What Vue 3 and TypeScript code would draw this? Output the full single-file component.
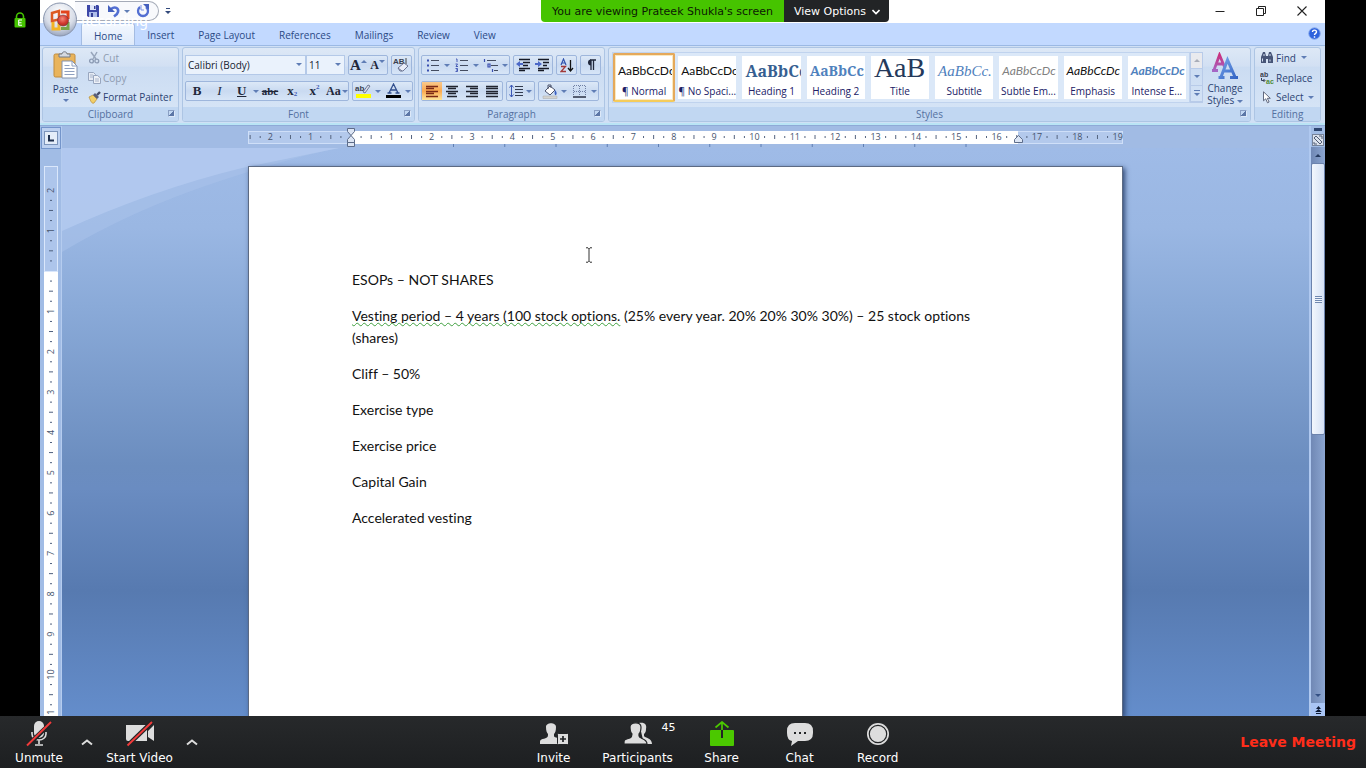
<script setup lang="ts">
import { ref } from 'vue'

interface StyleItem { name: string; sample: string; cls: string }

const tabs: string[] = ['Home', 'Insert', 'Page Layout', 'References', 'Mailings', 'Review', 'View']
const activeTab = ref('Home')

const styleItems: StyleItem[] = [
  { name: '¶ Normal', sample: 'AaBbCcDc', cls: 'plain' },
  { name: '¶ No Spaci...', sample: 'AaBbCcDc', cls: 'plain' },
  { name: 'Heading 1', sample: 'AaBbCc', cls: 'h1' },
  { name: 'Heading 2', sample: 'AaBbCc', cls: 'h2' },
  { name: 'Title', sample: 'AaB', cls: 'title' },
  { name: 'Subtitle', sample: 'AaBbCc.', cls: 'subtitle' },
  { name: 'Subtle Em...', sample: 'AaBbCcDc', cls: 'subtle' },
  { name: 'Emphasis', sample: 'AaBbCcDc', cls: 'emphasis' },
  { name: 'Intense E...', sample: 'AaBbCcDc', cls: 'intense' },
]
const activeStyle = ref('¶ Normal')

const fontName = ref('Calibri (Body)')
const fontSize = ref('11')

/* Ruler geometry: one centimetre in pixels, and the zero marks. */
const CM = 40.35
const ZERO_X = 103
const ZERO_Y = 105

const range = (from: number, to: number): number[] =>
  Array.from({ length: to - from + 1 }, (_, i) => from + i)

const hNums = range(-2, 19).filter((n) => n !== 0).map((n) => ({ n: Math.abs(n), x: ZERO_X + n * CM }))
const hHalves = range(-3, 18).map((n) => ZERO_X + (n + 0.5) * CM)
const hDots = range(-5, 37).map((n) => ZERO_X + (n + 0.5) * CM / 2).filter((x) => x > 4)
const tabStops = range(2, 12).map((n) => ZERO_X + n * 51.25)
const vNums = range(-2, 30).filter((n) => n !== 0).map((n) => ({ n: Math.abs(n), y: ZERO_Y + n * CM }))
const vHalves = range(-2, 30).map((n) => ZERO_Y + (n + 0.5) * CM)
const vDots = range(-4, 60).map((n) => ZERO_Y + (n + 0.5) * CM / 2)
</script>

<template>
  <div class="meeting">
    <div class="stage">
      <aside class="rail">
        <svg class="lock" width="12" height="16" viewBox="0 0 12 16">
          <path d="M2.5 7V4.5a3.5 3.5 0 0 1 7 0V7" fill="none" stroke="#45c400" stroke-width="1.6" />
          <rect x="0.5" y="6" width="11" height="9.5" rx="1" fill="#45c400" />
          <path d="M4.5 8h3.5M4.5 10.7h3M4.5 13.3h3.5M4.7 8v5.3" stroke="#fff" stroke-width="1.1" fill="none" />
        </svg>
      </aside>

      <section class="word">
        <header class="titlebar">
          <div class="quick">
            <button aria-label="Save"><svg width="14" height="14" viewBox="0 0 14 14"><path d="M1 1h11l1 1v11H1z" fill="#3d48a8" /><path d="M4 1h6v5H4z" fill="#dfe6fa" /><path d="M3 8h8v5H3z" fill="#aebdea" /><path d="M8 2h1.5v3H8zM5 9h2v4H5z" fill="#343f94" /></svg></button>
            <button aria-label="Undo"><svg width="14" height="14" viewBox="0 0 14 14"><path d="M4 5c4-3 8-1 7 3-.4 2-2 3-4 4.500" fill="none" stroke="#536fd2" stroke-width="2.6" /><path d="M1 1v7h7z" fill="#4560bd" /></svg></button>
            <i class="arr"></i>
            <button aria-label="Redo"><svg width="14" height="14" viewBox="0 0 14 14"><path d="M4 3a5 5 0 1 0 6 0" fill="none" stroke="#536fd2" stroke-width="2.3" /><path d="M7 0h6v6z" fill="#4560bd" /><path d="M5 1v5h3" fill="none" stroke="#7c94e6" /></svg></button>
          </div>
          <button class="customize" aria-label="Customize toolbar"><svg width="8" height="8" viewBox="0 0 8 8"><path d="M2 1.500h4" stroke="#334a7c" /><path d="M1 4h6L4 7z" fill="#334a7c" /></svg></button>
          <div class="winbtns">
            <button aria-label="Minimize"><svg width="10" height="10" viewBox="0 0 10 10"><path d="M0.500 5.500h9" stroke="#222" /></svg></button>
            <button aria-label="Restore"><svg width="10" height="10" viewBox="0 0 10 10"><path d="M0.500 2.500h7v7h-7zM2.500 2.500v-2h7v7h-2" fill="none" stroke="#222" /></svg></button>
            <button aria-label="Close"><svg width="10" height="10" viewBox="0 0 10 10"><path d="M0.500 0.500l9 9M9.500 0.500l-9 9" stroke="#222" stroke-width="1.100" /></svg></button>
          </div>
          <button class="orb" aria-label="Office menu">
            <svg width="36" height="37" viewBox="0 0 36 37">
              <defs><radialGradient id="orbFill" cx=".5" cy=".3" r=".75"><stop offset="0" stop-color="#fff" /><stop offset=".6" stop-color="#d8dde8" /><stop offset="1" stop-color="#8d9ab5" /></radialGradient>
                <radialGradient id="recFill" cx=".45" cy=".35" r=".7"><stop offset="0" stop-color="#f58a7c" /><stop offset=".6" stop-color="#d3392f" /><stop offset="1" stop-color="#a82a24" /></radialGradient></defs>
              <circle cx="18" cy="18.500" r="16.500" fill="url(#orbFill)" stroke="#8995ad" />
              <path d="M17 10l-7 2v8l7-1.500z" fill="none" stroke="#dd5a22" stroke-width="2.500" />
              <path d="M19 11h7v7" fill="none" stroke="#e2441d" stroke-width="3" />
              <path d="M11 21v7h6v-6" fill="none" stroke="#f3b323" stroke-width="3" />
              <path d="M19 27.500h7V21" fill="none" stroke="#78a548" stroke-width="3" />
              <circle cx="21" cy="19.500" r="5.500" fill="url(#recFill)" stroke="#7c3b3f" stroke-width=".7" />
            </svg>
          </button>
          <span class="recording">Recording</span>
        </header>

        <nav class="tabs">
          <button v-for="t in tabs" :key="t" :class="{ on: t === activeTab }" @click="activeTab = t">{{ t }}</button>
          <button class="help" aria-label="Help"><svg width="13" height="13" viewBox="0 0 13 13"><circle cx="6.500" cy="6.500" r="5.800" fill="#2e62dd" stroke="#8fb0ee" /><path d="M4.500 5c0-2.500 4-2.500 4 0 0 1.300-2 1.400-2 3M6.500 9.300v1.400" fill="none" stroke="#fff" stroke-width="1.400" /></svg></button>
        </nav>

        <div class="ribbon">
          <div class="group clipboard">
            <div class="gbody">
              <button class="paste">
                <svg width="26" height="29" viewBox="0 0 26 29"><rect x="1" y="3" width="21" height="23" rx="1.500" fill="#e9b45c" stroke="#c08b3c" /><path d="M6 6V3h3c0-3 5-3 5 0h3v3z" fill="#d5d9df" stroke="#727a86" /><path d="M9 10h10l5 5v12H9z" fill="#fff" stroke="#8492ad" /><path d="M19 10v5h5M11.500 14.500h5M11.500 17.500h10M11.500 20.500h10M11.500 23.500h10" fill="none" stroke="#8fa0c0" /></svg>
                <span>Paste</span><i class="arr"></i>
              </button>
              <div class="stack">
                <button class="off"><svg width="13" height="13" viewBox="0 0 13 13"><path d="M3 1l5 7M9 1L5 8" stroke="#98a6bc" stroke-width="1.500" /><circle cx="3.500" cy="10" r="1.900" fill="none" stroke="#8d9cb5" stroke-width="1.400" /><circle cx="8.800" cy="10" r="1.900" fill="none" stroke="#8d9cb5" stroke-width="1.400" /></svg>Cut</button>
                <button class="off"><svg width="13" height="13" viewBox="0 0 13 13"><path d="M.5 1.500h5l2 2v6h-7z" fill="#e6ebf4" stroke="#98a6bf" /><path d="M5.500 4.500h4l3 2.500v5.500h-7z" fill="#eef1f7" stroke="#98a6bf" /><path d="M7 8h4M7 10h4M2 4h3M2 6h3" stroke="#a8b4ca" /></svg>Copy</button>
                <button><svg width="13" height="13" viewBox="0 0 13 13"><path d="M1 6l4-2 4 4-3 4c-2 1-3-1-5-6z" fill="#f2cf68" stroke="#b78c37" stroke-width=".7" /><path d="M5 4l4 4 2-2-4-4z" fill="#5a5f78" /><path d="M9 4l3-3" stroke="#474f6c" stroke-width="2.400" /></svg>Format Painter</button>
              </div>
            </div>
            <footer>Clipboard<i class="launch"></i></footer>
          </div>

          <div class="group font">
            <div class="gbody rows">
              <div class="row">
                <div class="combo">
                  <label class="wide"><select v-model="fontName" aria-label="Font"><option>Calibri (Body)</option><option>Cambria</option></select><i class="arr"></i></label>
                  <label class="slim"><select v-model="fontSize" aria-label="Font size"><option>11</option><option>12</option></select><i class="arr"></i></label>
                </div>
                <div class="set">
                  <button class="serif grow" aria-label="Grow font">A<i class="arr up"></i></button>
                  <button class="serif shrink" aria-label="Shrink font">A<i class="arr"></i></button>
                </div>
                <div class="set"><button aria-label="Clear formatting"><svg width="17" height="16" viewBox="0 0 17 16"><text x="0" y="7" class="tiny">AB</text><path d="M13 1v6" stroke="#444" /><path d="M5 11l6-5 4 3-5 5H7z" fill="#e9edf8" stroke="#6d7694" /><path d="M5 11l4 3" stroke="#6d7694" /></svg></button></div>
              </div>
              <div class="row">
                <div class="set fmt">
                  <button class="serif b">B</button>
                  <button class="serif it">I</button>
                  <button class="serif u"><span>U</span></button><i class="arr"></i>
                  <button class="serif s">abc</button>
                  <button class="serif x">x<sub>2</sub></button>
                  <button class="serif x">x<sup>2</sup></button>
                  <button class="serif aa">Aa<i class="arr"></i></button>
                </div>
                <div class="set ink">
                  <button aria-label="Highlight"><svg width="17" height="16" viewBox="0 0 17 16"><text x="0" y="8" class="tiny">ab</text><path d="M8 9l5-7 2 1-5 7z" fill="#d7dceb" stroke="#59627e" stroke-width=".8" /><rect x="1" y="11" width="15" height="4" fill="#ff0" /></svg></button><i class="arr"></i>
                  <button aria-label="Font color"><svg width="15" height="16" viewBox="0 0 15 16"><path d="M3 10L7.500 1 12 10M4.500 7h6M1.500 10h4M9.500 10h4" fill="none" stroke="#33508f" stroke-width="1.300" /><rect x="0" y="12" width="15" height="3" fill="#000" /></svg></button><i class="arr"></i>
                </div>
              </div>
            </div>
            <footer>Font<i class="launch"></i></footer>
          </div>

          <div class="group para">
            <div class="gbody rows">
              <div class="row">
                <div class="set lists">
                  <button aria-label="Bullets"><svg width="14" height="14" viewBox="0 0 14 14"><path d="M5 2.500h8M5 7.500h8M5 12.500h8" stroke="#444c60" /><path d="M1 2.500h2M1 7.500h2M1 12.500h2" stroke="#3a4fb0" stroke-width="2" /></svg></button><i class="arr"></i>
                  <button aria-label="Numbering"><svg width="14" height="14" viewBox="0 0 14 14"><path d="M5 2.500h8M5 7.500h8M5 12.500h8" stroke="#444c60" /><path d="M1 1h1v3M.5 6h2L1 8.500h2M.5 10.500h2v3h-2M1 12h1" fill="none" stroke="#3a4fb0" stroke-width=".9" /></svg></button><i class="arr"></i>
                  <button aria-label="Multilevel list"><svg width="16" height="14" viewBox="0 0 16 14"><path d="M4 2.500h9M8 7.500h7M11 12.500h4" stroke="#444c60" /><path d="M1.500 1v3M5 6h2v3H5zM9.500 11v3" fill="none" stroke="#3a4fb0" stroke-width="1.200" /></svg></button><i class="arr"></i>
                </div>
                <div class="set">
                  <button aria-label="Decrease indent"><svg width="15" height="14" viewBox="0 0 15 14"><path d="M3 1.500h11M7 4.500h7M7 7.500h5M3 10.500h11M3 12.500h6" stroke="#161a26" stroke-width="1.300" /><path d="M0 6l4-3v2h3v2H4v2z" fill="#4b68c8" /></svg></button>
                  <button aria-label="Increase indent"><svg width="15" height="14" viewBox="0 0 15 14"><path d="M3 1.500h11M8 4.500h6M8 7.500h4M3 10.500h11M3 12.500h6" stroke="#161a26" stroke-width="1.300" /><path d="M7 6L3 3v2H0v2h3v2z" fill="#4b68c8" /></svg></button>
                </div>
                <div class="set"><button aria-label="Sort"><svg width="14" height="15" viewBox="0 0 14 15"><path d="M1 7l2.500-6L6 7M2 5h3" fill="none" stroke="#3153ae" stroke-width="1.200" /><path d="M1 8.500h4.500L1 13.500h5" fill="none" stroke="#a23a3a" stroke-width="1.300" /><path d="M10.500 2v11M8 10l2.500 3 2.500-3" fill="none" stroke="#111" stroke-width="1.300" /></svg></button></div>
                <div class="set"><button aria-label="Show marks"><svg width="12" height="14" viewBox="0 0 12 14"><path d="M6 2v10M8.500 2v10M5 2h6" stroke="#20283c" stroke-width="1.300" /><path d="M6 1.500a3 3 0 0 0 0 6z" fill="#20283c" /></svg></button></div>
              </div>
              <div class="row">
                <div class="set aligns">
                  <button class="hot" aria-label="Align left"><svg width="14" height="13" viewBox="0 0 14 13"><path d="M1 1.500h12M1 3.500h8M1 6.500h12M1 8.500h8M1 11.500h12" stroke="#7c2a16" stroke-width="1.300" /></svg></button>
                  <button aria-label="Center"><svg width="14" height="13" viewBox="0 0 14 13"><path d="M1 1.500h12M3 3.500h8M1 6.500h12M3 8.500h8M2 11.500h10" stroke="#20242f" stroke-width="1.300" /></svg></button>
                  <button aria-label="Align right"><svg width="14" height="13" viewBox="0 0 14 13"><path d="M1 1.500h12M5 3.500h8M1 6.500h12M5 8.500h8M1 11.500h12" stroke="#20242f" stroke-width="1.300" /></svg></button>
                  <button aria-label="Justify"><svg width="14" height="13" viewBox="0 0 14 13"><path d="M1 1.500h12M1 3.500h12M1 6.500h12M1 8.500h12M1 11.500h12" stroke="#20242f" stroke-width="1.300" /></svg></button>
                </div>
                <div class="set"><button class="spacing" aria-label="Line spacing"><svg width="15" height="14" viewBox="0 0 15 14"><path d="M6 2.500h8M6 5.500h8M6 8.500h8M6 11.500h8" stroke="#333b4e" /><path d="M2.500 1v12M.5 3.500l2-2.500 2 2.500M.5 10.500l2 2.500 2-2.500" fill="none" stroke="#3b57b5" /></svg><i class="arr"></i></button></div>
                <div class="set ink">
                  <button aria-label="Shading"><svg width="16" height="15" viewBox="0 0 16 15"><path d="M3 7l5-5 5 4-5 5z" fill="#fff" stroke="#4b526b" /><path d="M6 5V1h3v3" fill="none" stroke="#4b526b" /><path d="M13 6c2 2 2 4 1 5s-2-2-1-5z" fill="#3a5fc2" /><path d="M1 12h14v2.500H1z" fill="#d4d3cf" stroke="#a9a9a9" stroke-width=".5" /></svg></button><i class="arr"></i>
                  <button aria-label="Borders"><svg width="13" height="13" viewBox="0 0 13 13"><path d="M1 .5h11M1 6.500h11M.5 1v10M6.500 1v10M12.500 1v10" stroke="#7080a4" stroke-dasharray="1 1" /><path d="M0 12h13" stroke="#2a3145" stroke-width="1.400" /></svg></button><i class="arr"></i>
                </div>
              </div>
            </div>
            <footer>Paragraph<i class="launch"></i></footer>
          </div>

          <div class="group styles">
            <div class="gbody">
              <div class="gallery">
                <button v-for="s in styleItems" :key="s.name" class="card" :class="{ on: s.name === activeStyle }" @click="activeStyle = s.name">
                  <span class="sample" :class="s.cls">{{ s.sample }}</span>
                  <span class="cname">{{ s.name }}</span>
                </button>
              </div>
              <div class="gscroll">
                <button class="dim" aria-label="Previous styles"><i class="arr up"></i></button>
                <button aria-label="Next styles"><i class="arr"></i></button>
                <button aria-label="More styles"><i class="bar"></i><i class="arr"></i></button>
              </div>
              <button class="change">
                <svg width="28" height="28" viewBox="0 0 28 28"><defs><linearGradient id="aPink" x1="0" y1="0" x2="0" y2="1"><stop offset="0" stop-color="#c9307f" /><stop offset="1" stop-color="#a566c5" /></linearGradient><linearGradient id="aBlue" x1="0" y1="0" x2="1" y2="1"><stop offset="0" stop-color="#78a5ea" /><stop offset="1" stop-color="#3263c4" /></linearGradient></defs><path d="M3 18L8.500 3 14 16M5 12h7M1 18.500h6" fill="none" stroke="url(#aPink)" stroke-width="2.800" /><path d="M10 25L16.500 8 24 25M12 19h9M7.500 25.500h6M19 25.500h8" fill="none" stroke="url(#aBlue)" stroke-width="3" /></svg>
                <span>Change</span><span>Styles <i class="arr"></i></span>
              </button>
            </div>
            <footer>Styles<i class="launch"></i></footer>
          </div>

          <div class="group editing">
            <div class="gbody stack">
              <button><svg width="14" height="13" viewBox="0 0 14 13"><path d="M1 6l2-5h2l1 4h2l1-4h2l2 5v6H8V8H6v4H1z" fill="#465477" /><path d="M2.500 7.500v3M4 3v2M10 3v2M10 8.500v2" stroke="#d3def2" /></svg>Find <i class="arr"></i></button>
              <button><svg width="14" height="13" viewBox="0 0 14 13"><text x="0" y="6" class="tiny small">ab</text><text x="6" y="13" class="tiny small green">ac</text><path d="M1.500 7v2.500h3M3.500 8l1.500 1.500L3.500 11" fill="none" stroke="#333d58" /></svg>Replace</button>
              <button><svg width="14" height="13" viewBox="0 0 14 13"><path d="M3.500.8v9l2.200-2 1.800 4 1.600-.8-1.800-3.700h3z" fill="#fff" stroke="#525b73" stroke-width=".9" /></svg>Select <i class="arr"></i></button>
            </div>
            <footer>Editing</footer>
          </div>
        </div>

        <div class="work">
          <div class="leftcol">
            <button class="tabmark" aria-label="Tab selector"><svg width="14" height="14" viewBox="0 0 14 14"><rect x=".5" y=".5" width="13" height="13" fill="#e5edf9" stroke="#7c94bb" /><path d="M5 4v5.500h5" fill="none" stroke="#20304e" stroke-width="2" /></svg></button>
            <div class="vruler">
              <svg width="14" height="100%">
                <rect x=".5" y=".5" width="13" height="105" fill="#adc5eb" stroke="#dae7fb" />
                <rect x="0" y="106" width="14" height="2000" fill="#fff" />
                <path v-for="y in vHalves" :key="'h' + y" :d="`M5 ${y}h4`" stroke="#4e5f7d" />
                <path v-for="y in vDots" :key="'d' + y" :d="`M6 ${y}h2`" stroke="#4e5f7d" />
                <text v-for="m in vNums" :key="'n' + m.y" :transform="`translate(10 ${m.y}) rotate(-90)`" class="rnum">{{ m.n }}</text>
              </svg>
            </div>
          </div>

          <div class="center">
            <div class="hruler">
              <svg width="875" height="22" viewBox="0 1 875 22">
                <rect x=".5" y="6.500" width="874" height="12" fill="#b3c9ec" stroke="#cfdff8" />
                <rect x="103" y="6" width="667" height="13" fill="#fff" />
                <path v-for="x in hHalves" :key="'h' + x" :d="`M${x} 10v4`" stroke="#55647f" />
                <path v-for="x in hDots" :key="'d' + x" :d="`M${x} 11v2`" stroke="#55647f" />
                <text v-for="m in hNums" :key="'n' + m.x" :x="m.x" y="15" class="rnum">{{ m.n }}</text>
                <path v-for="x in tabStops" :key="'t' + x" :d="`M${x} 19v3`" stroke="#5f7fb4" />
                <path d="M99.500 3.500h7v3l-3.500 4-3.500-4zM99.500 17.500v-3l3.500-4 3.500 4v3zM99.500 17.500h7v4h-7z" fill="#dce5f4" stroke="#5d6c89" />
                <path d="M766.500 17.500v-3l4-4 4 4v3z" fill="#dce5f4" stroke="#5d6c89" />
              </svg>
            </div>
            <main class="canvas">
              <svg class="swoosh" width="280" height="110" viewBox="0 0 280 110">
                <path d="M0 104Q70 62 155 34T280 0H0z" fill="#a9c1ea" opacity=".6" />
                <path d="M0 83Q90 42 180 20L277 0H0z" fill="#b4cbf0" opacity=".8" />
              </svg>
              <article class="page">
                <p>ESOPs – NOT SHARES</p>
                <p><span class="squiggle">Vesting period – 4 years (100 stock options.</span> (25% every year. 20% 20% 30% 30%) – 25 stock options <br>(shares)</p>
                <p>Cliff – 50%</p>
                <p>Exercise type</p>
                <p>Exercise price</p>
                <p>Capital Gain</p>
                <p>Accelerated vesting</p>
                <svg class="ibeam" width="8" height="16" viewBox="0 0 8 16"><path d="M1 .8h2l1 1 1-1h2M4 1.500v12.500M1 15.200h2l1-1 1 1h2" fill="none" stroke="#333" /></svg>
              </article>
            </main>
          </div>

          <div class="rightcol">
            <button class="split" aria-label="Split"></button>
            <button class="rulerbtn" aria-label="View ruler"><svg width="12" height="12" viewBox="0 0 12 12"><rect x=".5" y=".5" width="11" height="11" fill="#dde3ee" stroke="#76839b" /><path d="M2 4l2-2 6 6-2 2zM2 8v2h3M7 2h3v3" fill="none" stroke="#505c75" /></svg></button>
            <div class="track">
              <button class="cap" aria-label="Scroll up"><i class="arr up"></i></button>
              <div class="thumb"><i></i></div>
              <button class="cap" aria-label="Scroll down"><i class="arr"></i></button>
            </div>
            <button class="prev" aria-label="Previous page"><svg width="7" height="8" viewBox="0 0 7 8"><path d="M1 3L3.500 0 6 3zM0 6L3.500 3 7 6zM1 7h5v1H1z" fill="#0d1a34" /></svg></button>
          </div>
        </div>
      </section>
      <aside class="rail right"></aside>

      <div class="banner">
        <span>You are viewing Prateek Shukla's screen</span>
        <button>View Options<svg width="8" height="6" viewBox="0 0 8 6"><path d="M.5 1L4 4.500 7.500 1" fill="none" stroke="#fff" stroke-width="1.600" /></svg></button>
      </div>
    </div>

    <footer class="controls">
      <div class="left">
        <button class="ctl mute"><svg width="26" height="26" viewBox="0 0 26 26"><rect x="8" y="0" width="10" height="17" rx="5" fill="#ddd" /><path d="M6 11v2a7 6 0 0 0 14 0v-2M13 19v4M9 24h8" fill="none" stroke="#ddd" stroke-width="1.600" /><path d="M1 25L26 1" stroke="#222426" stroke-width="4.500" /><path d="M1 24.500L25 1" stroke="#f23b3b" stroke-width="1.900" /></svg><span>Unmute</span></button>
        <button class="chev" aria-label="Audio options"><svg width="12" height="7" viewBox="0 0 12 7"><path d="M1 5.500L6 1.500l5 4" fill="none" stroke="#ddd" stroke-width="2" /></svg></button>
        <button class="ctl video"><svg width="30" height="26" viewBox="0 0 30 26"><path d="M1 4h19a2 2 0 0 1 2 2v14H3a2 2 0 0 1-2-2zM23 10l6-6v16l-6-4z" fill="#ddd" /><path d="M2 25L27 1" stroke="#222426" stroke-width="4.500" /><path d="M2.500 24.500L27 1" stroke="#f23b3b" stroke-width="1.900" /></svg><span>Start Video</span></button>
        <button class="chev" aria-label="Video options"><svg width="12" height="7" viewBox="0 0 12 7"><path d="M1 5.500L6 1.500l5 4" fill="none" stroke="#ddd" stroke-width="2" /></svg></button>
      </div>
      <div class="mid">
        <button class="ctl"><svg width="28" height="26" viewBox="0 0 28 26"><path d="M6 6c0-5 10-5 10 0 0 4-1 6-2 7v2c0 2 7 2 7 4v4H0c0-5 0-4 6-6 2-1 2-2 2-4-1-1-2-3-2-7z" fill="#ddd" /><rect x="17.500" y="12.500" width="11" height="11" rx="1" fill="#ddd" stroke="#222426" /><path d="M23 15v6M20 18h6" stroke="#222426" stroke-width="1.700" /></svg><span>Invite</span></button>
        <button class="ctl"><svg width="28" height="26" viewBox="0 0 28 26"><path d="M15 2c6-1 8 2 7 6 0 3-1 4-2 5v2c1 2 8 2 8 8h-8z" fill="#ddd" /><path d="M6 6c0-5 11-6 11 0 0 4-1 6-2 7v2c0 3 8 2 8 8H0c0-5 0-4 6-6 2-1 2-2 2-4-1-1-2-3-2-7z" fill="#ddd" stroke="#222426" stroke-width="1.200" /></svg><span>Participants</span><em>45</em></button>
        <button class="ctl"><svg width="26" height="26" viewBox="0 0 26 26"><rect x="1" y="9" width="24" height="16" rx="1" fill="#4bc800" /><path d="M13 9v8" stroke="#222426" stroke-width="2" /><path d="M13 9V1M6.500 6.500L13 1l6.500 5.500" fill="none" stroke="#4bc800" stroke-width="1.700" /></svg><span>Share</span></button>
        <button class="ctl tight"><svg width="26" height="26" viewBox="0 0 26 26"><path d="M8 2h10q8 0 8 8v2q0 8-8 8h-7l-7 5 1-5q-5-1-5-8v-2q0-8 8-8z" fill="#ddd" /><path d="M7 12h2M12 12h2M17 12h2" stroke="#222426" stroke-width="2" /></svg><span>Chat</span></button>
        <button class="ctl"><svg width="24" height="26" viewBox="0 0 24 26"><circle cx="12" cy="13" r="11" fill="#ddd" /><circle cx="12" cy="13" r="8.700" fill="#ddd" stroke="#222426" stroke-width="1.200" /></svg><span>Record</span></button>
      </div>
      <button class="leave">Leave Meeting</button>
    </footer>
  </div>
</template>

<style>
body { margin: 0; background: #000; }
</style>

<style scoped>
* { box-sizing: border-box; }
button { border: 0; padding: 0; margin: 0; background: none; font: inherit; color: inherit; cursor: default; display: flex; align-items: center; justify-content: center; }
svg { display: block; flex: none; }
.meeting { height: 100vh; display: flex; flex-direction: column; background: #000; overflow: hidden; font-family: "DejaVu Sans", sans-serif; }
.stage { flex: 1; min-height: 0; display: flex; position: relative; }
.rail { width: 40px; flex: none; }
.rail.right { width: 41px; }
.lock { margin: 12px auto 0 14px; }
.word { flex: 1; min-width: 0; display: flex; flex-direction: column; background: #a3bde5; font-family: "Open Sans", sans-serif; font-size: 10px; color: #2c4373; }

.arr { width: 0; height: 0; flex: none; display: inline-block; border: 3px solid transparent; border-top-color: #5f7db5; border-bottom: 0; }
.arr.up { border-top: 0; border-bottom: 3px solid #5f7db5; }

.titlebar { height: 23px; flex: none; display: flex; align-items: center; padding-bottom: 1px; background: #fff; position: relative; z-index: 2; }
.quick { height: 20px; width: 84px; margin: 0 0 0 35px; padding-left: 11px; display: flex; align-items: center; gap: 7px; border: 1px solid #a5abb8; border-left: 0; border-radius: 0 10px 10px 0; background: #f8f9fc; }
.quick .arr { margin: 0 -1px 0 -4px; }
.customize { margin-left: 5px; }
.winbtns { margin-left: auto; margin-right: 18px; display: flex; gap: 31px; }
.orb { position: absolute; left: 2px; top: 1px; }
.recording { position: absolute; left: 41px; top: 11px; font-size: 14px; line-height: 20px; font-family: "Noto Sans", sans-serif; color: #fff; }

.tabs { height: 22px; flex: none; display: flex; padding-left: 41px; background: #c2d9ff; font-size: 10px; }
.tabs button { height: 22px; padding: 2px 12px 0; color: #2b4a86; }
.tabs button.on { background: linear-gradient(#f3f8ff, #dfeafa); border: 1px solid #a4bce2; border-bottom: 0; border-radius: 3px 3px 0 0; }
.tabs .help { margin-left: auto; padding: 0 4px 2px; }

.ribbon { height: 80px; flex: none; display: flex; gap: 3px; padding: 1px 4px 1px 2px; background: #d0e0f5; border-top: 1px solid #9bb9e4; border-bottom: 2px solid #b9e4f5; }
.group { display: flex; flex-direction: column; border: 1px solid #adc5e4; border-radius: 3px; overflow: hidden; background: linear-gradient(#dde8f6, #d2e0f3 25%, #cbdcf2 26%, #d8e6f7); }
.gbody { flex: 1; min-height: 0; display: flex; }
.group footer { height: 14px; flex: none; display: flex; align-items: center; justify-content: center; position: relative; background: #c1d7f2; color: #5470a0; }
.launch { position: absolute; right: 3px; top: 3px; width: 7px; height: 7px; border: 1px solid #8a9fc4; border-right-color: #dce8f8; border-bottom-color: #dce8f8; background: linear-gradient(135deg, transparent 45%, #5c76a6 46%); }
.clipboard { width: 137px; }
.font { width: 233px; }
.para { width: 187px; }
.styles { flex: 1; min-width: 0; }
.editing { width: 67px; }

.paste { width: 45px; flex-direction: column; justify-content: flex-start; padding-top: 3px; }
.paste span { line-height: 14px; margin: 2px 0 3px; }
.stack { display: flex; flex-direction: column; }
.stack button { height: 20px; gap: 2px; justify-content: flex-start; white-space: pre; }
.stack .off { color: #8e9bb0; }

.rows { flex-direction: column; padding: 7px 0 0 2px; gap: 6px; }
.row { display: flex; gap: 3px; height: 20px; }
.set { display: flex; align-items: center; border: 1px solid #9eb6dc; border-radius: 2px; background: linear-gradient(#dce8f7, #c9daf1 50%, #d7e5f7); }
.set button { height: 18px; min-width: 19px; }
.combo { display: flex; }
.combo label { display: flex; align-items: center; position: relative; border: 1px solid #b4c9e8; background: #eaf2fc; }
.combo .wide { width: 121px; }
.combo .slim { width: 39px; }
.combo select { appearance: none; width: 100%; height: 18px; border: 0; padding: 0 2px; margin: 0; background: none; font: inherit; color: #151c30; }
.combo .arr { position: absolute; right: 3px; top: 7px; }
.serif { font-family: "Liberation Serif", serif; font-weight: bold; color: #22283a; }
.grow { font-size: 15px; }
.shrink { font-size: 12px; }
.grow .arr, .shrink .arr { margin-bottom: 8px; }
.fmt { width: 164px; }
.fmt button { flex: 1; }
.fmt .it { font-size: 13px; font-style: italic; font-weight: normal; }
.b { font-size: 13px; }
.u { font-size: 13px; text-decoration: underline; }
.s { font-size: 11px; text-decoration: line-through; }
.x { font-size: 13px; }
.x sub, .x sup { font-size: 7px; line-height: 7px; color: #3f5bb2; }
.x sub { margin-top: 7px; }
.x sup { margin-bottom: 7px; }
.aa { font-size: 12px; gap: 1px; }
.ink { width: 61px; justify-content: space-around; }
.tiny { font: bold 8px "Liberation Sans", sans-serif; fill: #3a3f4e; }
.tiny.small { font-size: 7px; }
.tiny.green { fill: #4d8a35; }
.lists { width: 89px; justify-content: space-around; }
.aligns button { width: 20px; }
.para .set button { gap: 2px; }
.para .set .spacing { padding: 0 2px; }
.hot { background: linear-gradient(#f9c98c, #fca94e 50%, #fde59b); }

.styles .gbody { padding: 4px 3px 4px; }
.gallery { flex: 1; min-width: 0; display: flex; background: #dbe8f8; border: 1px solid #c0d3ee; }
.card { flex: 1; min-width: 0; flex-direction: column; justify-content: flex-start; margin: 3px; background: #fff; color: #202066; overflow: hidden; }
.card.on { margin: 0; padding-top: 1px; border: 2px solid #e5a95b; border-bottom-color: #f5cc5b; outline: 1px solid #fbe9c0; outline-offset: -3px; border-radius: 2px; }
.sample { height: 28px; line-height: 30px; width: 100%; padding: 0 3px; overflow: hidden; white-space: nowrap; text-align: left; color: #101010; font-size: 12px; font-family: Lato, sans-serif; }
.cname { line-height: 14px; white-space: nowrap; }
.sample.h1 { font: bold 16px/30px "Noto Serif", "Liberation Serif", serif; color: #365f91; }
.sample.h2 { font: bold 14px/30px "Noto Serif", "Liberation Serif", serif; color: #4f81bd; }
.sample.title { font: 28px/24px "Liberation Serif", serif; color: #24395b; }
.sample.subtitle { font: italic 15px/30px "Liberation Serif", serif; color: #4f81bd; }
.sample.subtle { font-style: italic; color: #808080; }
.sample.emphasis { font-style: italic; }
.sample.intense { font-style: italic; font-weight: bold; color: #4f81bd; }
.gscroll { width: 13px; display: flex; flex-direction: column; border: 1px solid #b8cbe9; }
.gscroll button { flex: 1; flex-direction: column; gap: 2px; border-bottom: 1px solid #b8cbe9; }
.gscroll .dim { background: #e9eaee; }
.gscroll .dim .arr { border-bottom-color: #a9adb8; }
.bar { width: 6px; height: 1px; background: #5f7db5; }
.change { width: 44px; flex-direction: column; justify-content: flex-start; line-height: 12px; white-space: nowrap; }
.change svg { margin-bottom: 2px; }
.change .arr { vertical-align: middle; }
.editing .stack { padding-left: 5px; }

.work { flex: 1; min-height: 0; display: flex; border-top: 1px solid #8faad7; }
.leftcol { width: 22px; flex: none; display: flex; flex-direction: column; background: #a1bce5; border-right: 1px solid #b5ccef; }
.tabmark { height: 22px; margin: 1px 0 0 1px; border: 1px solid #7495cb; background: #bcd0f0; }
.vruler { flex: 1; min-height: 0; overflow: hidden; margin: 17px 0 0 4px; }
.rnum { font: 9px "Open Sans", sans-serif; fill: #46546d; text-anchor: middle; }
.center { flex: 1; min-width: 0; display: flex; flex-direction: column; }
.hruler { height: 22px; flex: none; display: flex; justify-content: center; background: #a1bbe4; }
.canvas { flex: 1; min-height: 0; position: relative; display: flex; justify-content: center; padding-top: 18px; overflow: hidden; background: linear-gradient(#9fbbe7, #9ab7e3 14%, #8aaad8 28%, #6b8dbf 56%, #6a8cc1 60%, #577ab0 78%, #648dcb 100%); }
.swoosh { position: absolute; left: 0; top: 0; }
.page { width: 875px; position: relative; padding: 102px 104px 0 103px; border: 1px solid #5c6a83; border-bottom: 0; background: #fff; box-shadow: 2px 2px 5px #2f4773; color: #111; font: 14px/22px Lato, sans-serif; font-variant-ligatures: none; }
.page p { margin: 0 0 14px; }
.squiggle { text-decoration: underline wavy #3fa03f 1px; text-underline-offset: 1px; text-decoration-skip-ink: none; }
.ibeam { position: absolute; left: 336px; top: 80px; }

.rightcol { width: 16px; flex: none; display: flex; flex-direction: column; background: #a1bce5; border-left: 2px solid #b0c9f0; }
.split { height: 3px; margin: 2px 3px 2px; background: #2d456f; }
.rulerbtn { height: 14px; }
.track { flex: 1; min-height: 0; display: flex; flex-direction: column; background: linear-gradient(90deg, #7088b5, #8ba5d0); }
.cap { height: 16px; flex: none; }
.cap .arr { border-top-color: #345084; }
.cap .arr.up { border-bottom-color: #24395f; }
.thumb { height: 49%; display: flex; align-items: center; justify-content: center; border: 1px solid #6c83ad; border-radius: 2px; background: linear-gradient(90deg, #f3f7fd, #d5e1f5); }
.thumb i { width: 7px; height: 7px; background: repeating-linear-gradient(#7088b0 0 1px, #eff4fc 1px 2px); }
.track .cap:last-child { margin-top: auto; }
.prev { height: 13px; flex: none; background: #a9c5f5; }

.banner { position: absolute; z-index: 5; top: 0; left: 541px; display: flex; height: 22px; font-size: 11px; line-height: 22px; border-radius: 0 0 4px 4px; overflow: hidden; white-space: nowrap; }
.banner span { padding: 1px 11px 0; background: #46c400; color: #0c1a04; }
.banner button { padding: 1px 9px 0 10px; gap: 6px; background: #222426; color: #fff; }

.controls { height: 52px; flex: none; display: flex; justify-content: space-between; background: linear-gradient(#27292b, #1d1f21); color: #fff; font-size: 12px; }
.left, .mid { display: flex; }
.ctl { position: relative; width: 84px; flex-direction: column; justify-content: flex-start; padding-top: 5px; line-height: 16px; gap: 3px; white-space: nowrap; }
.ctl.tight { width: 72px; }
.ctl.mute { width: 78px; }
.ctl.video { width: 87px; }
.chev { width: 18px; }
.ctl em { position: absolute; left: 66px; top: 5px; font-size: 11px; line-height: 14px; font-style: normal; }
.leave { padding: 0 10px; color: #ff2d1a; font-size: 14px; font-weight: bold; }
</style>
